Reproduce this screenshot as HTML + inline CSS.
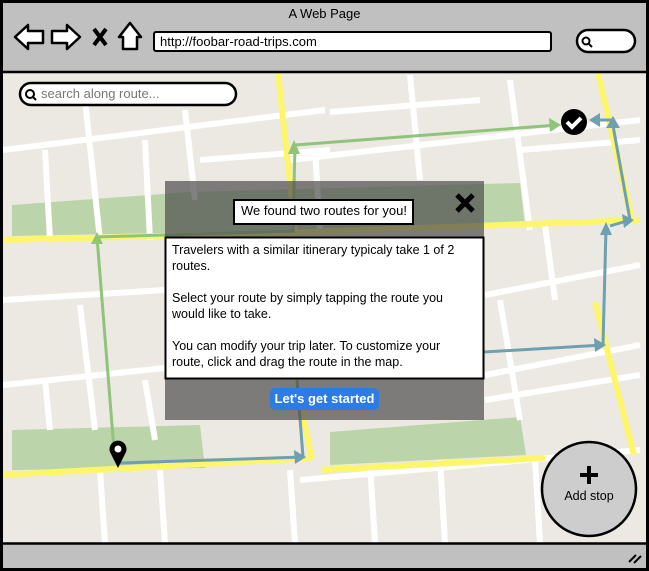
<!DOCTYPE html>
<html><head><style>
body{margin:0;width:649px;height:571px;overflow:hidden;font-family:"Liberation Sans",sans-serif;}
.t{position:absolute;color:#000;}
</style></head><body>
<svg width="649" height="571" style="position:absolute;left:0;top:0">
<rect x="0" y="0" width="649" height="571" fill="#c0c0c0"/>
<rect x="2" y="72" width="644" height="472" fill="#ebe9e2"/>
<polygon points="12,205 190,192 520,183 525,226 12,236" fill="#bcd4aa"/>
<polygon points="12,430 200,425 205,468 12,470" fill="#bcd4aa"/>
<polygon points="330,432 520,417 526,455 330,465" fill="#bcd4aa"/>
<g stroke="#fff" stroke-width="6" fill="none">
<line x1="3" y1="150" x2="325" y2="110"/>
<line x1="200" y1="160" x2="330" y2="150"/>
<line x1="330" y1="112" x2="480" y2="100"/>
<line x1="290" y1="160" x2="640" y2="120"/>
<line x1="520" y1="150" x2="640" y2="140"/>
<line x1="85" y1="100" x2="100" y2="240"/>
<line x1="45" y1="150" x2="50" y2="240"/>
<line x1="145" y1="140" x2="150" y2="240"/>
<line x1="185" y1="110" x2="195" y2="200"/>
<line x1="315" y1="150" x2="320" y2="230"/>
<line x1="410" y1="75" x2="420" y2="180"/>
<line x1="510" y1="80" x2="530" y2="230"/>
<line x1="545" y1="225" x2="555" y2="300"/>
<line x1="3" y1="300" x2="165" y2="290"/>
<line x1="3" y1="385" x2="165" y2="368"/>
<line x1="80" y1="305" x2="95" y2="430"/>
<line x1="45" y1="380" x2="50" y2="430"/>
<line x1="145" y1="380" x2="155" y2="440"/>
<line x1="485" y1="295" x2="640" y2="265"/>
<line x1="485" y1="375" x2="640" y2="345"/>
<line x1="485" y1="400" x2="640" y2="375"/>
<line x1="500" y1="300" x2="520" y2="420"/>
<line x1="100" y1="470" x2="105" y2="543"/>
<line x1="160" y1="470" x2="165" y2="543"/>
<line x1="290" y1="470" x2="295" y2="543"/>
<line x1="370" y1="465" x2="375" y2="543"/>
<line x1="440" y1="460" x2="445" y2="543"/>
<line x1="535" y1="460" x2="540" y2="543"/>
<line x1="300" y1="480" x2="640" y2="450"/>
</g>
<g stroke="#fdf66a" stroke-width="6" fill="none">
<polyline points="2,240 280,233 640,220"/>
<line x1="278" y1="73" x2="296" y2="238"/>
<line x1="598" y1="73" x2="632" y2="220"/>
<line x1="2" y1="475" x2="312" y2="458"/>
<line x1="322" y1="470" x2="545" y2="458"/>
<line x1="595" y1="302" x2="634" y2="455"/>
<line x1="295" y1="380" x2="312" y2="458"/>
</g>
<g stroke="#8fc47a" stroke-width="3" fill="none">
<polyline points="114,450 97,237 293,231 295,145 558,125"/>
</g>
<polygon points="97,232 91,244 103,244" fill="#8fc47a"/>
<polygon points="294,140 288,154 300,154" fill="#8fc47a"/>
<polygon points="561,125 549,118 550,132" fill="#8fc47a"/>
<g stroke="#6fa0b0" stroke-width="3" fill="none">
<polyline points="120,463 303,457 297,380"/>
<polyline points="484,352 603,345 606,228"/>
<polyline points="610,226 630,220 612,120 593,120"/>
</g>
<polygon points="306,457 294,450 295,464" fill="#6fa0b0"/>
<polygon points="606,345 594,338 595,352" fill="#6fa0b0"/>
<polygon points="606,222 600,235 612,235" fill="#6fa0b0"/>
<polygon points="634,220 622,214 624,228" fill="#6fa0b0"/>
<polygon points="589,120 600,113 600,127" fill="#6fa0b0"/>
<polygon points="613,116 606,128 620,128" fill="#6fa0b0"/>
<path d="M118,468 L110,452 A8.5,8.5 0 1 1 126,452 Z" fill="#000"/>
<circle cx="118" cy="449" r="3.5" fill="#fff"/>
<circle cx="574" cy="122" r="13" fill="#000"/>
<path d="M567,122 l5,5 l9,-9" stroke="#fff" stroke-width="4" fill="none"/>
<rect x="165" y="181" width="319" height="239" fill="rgba(80,80,80,0.72)"/>
<rect x="165.5" y="237.5" width="318" height="141" fill="#fff" stroke="#000" stroke-width="2"/>
<rect x="234" y="200" width="179" height="24" fill="#fff" stroke="#000" stroke-width="2"/>
<path d="M457,195 l16,16 M473,195 l-16,16" stroke="#000" stroke-width="5"/>
<rect x="270" y="388" width="109" height="22" rx="5" fill="#2d7be5"/>
<circle cx="589" cy="489" r="47" fill="#cdcdcd" stroke="#000" stroke-width="2.5"/>
<path d="M589,466 v18 M580,475 h18" stroke="#000" stroke-width="4"/>
<rect x="1.5" y="1.5" width="646" height="568" fill="none" stroke="#000" stroke-width="3"/>
<line x1="2" y1="72" x2="647" y2="72" stroke="#000" stroke-width="2.5"/>
<line x1="2" y1="543.5" x2="647" y2="543.5" stroke="#000" stroke-width="2.5"/>
<path d="M629,562 l7,-7 M634,563 l7,-7" stroke="#000" stroke-width="2"/>
<path d="M15,37 L28,25 L28,31 L43,31 L43,43 L28,43 L28,49 Z" fill="#fff" stroke="#000" stroke-width="2.5" stroke-linejoin="round"/>
<path d="M80,37 L67,25 L67,31 L52,31 L52,43 L67,43 L67,49 Z" fill="#fff" stroke="#000" stroke-width="2.5" stroke-linejoin="round"/>
<path d="M94,29 l12,16 M106,29 l-12,16" stroke="#000" stroke-width="4"/>
<path d="M130,23 L119,37 L123,37 L123,49 L137,49 L137,37 L141,37 Z" fill="#fff" stroke="#000" stroke-width="2.5" stroke-linejoin="round"/>
<rect x="154" y="32" width="397" height="19" rx="2" fill="#fff" stroke="#000" stroke-width="2"/>
<rect x="577" y="30" width="58" height="22" rx="11" fill="#fff" stroke="#000" stroke-width="2.5"/>
<circle cx="586" cy="41" r="3.5" fill="none" stroke="#000" stroke-width="2"/>
<line x1="589" y1="44" x2="592" y2="47" stroke="#000" stroke-width="2"/>
<rect x="20" y="83" width="216" height="22" rx="11" fill="#fff" stroke="#000" stroke-width="2.5"/>
<circle cx="30" cy="94" r="4" fill="none" stroke="#000" stroke-width="2"/>
<line x1="33" y1="97" x2="36" y2="100" stroke="#000" stroke-width="2"/>
</svg>
<div class="t" style="left:0;width:649px;top:6px;text-align:center;font-size:13px">A Web Page</div>
<div class="t" style="left:160px;top:34px;font-size:13px">http://foobar-road-trips.com</div>
<div class="t" style="left:41px;top:86px;font-size:13px;color:#777">search along route...</div>
<div class="t" style="left:241px;top:203px;font-size:13px">We found two routes for you!</div>
<div class="t" style="left:172px;top:242px;width:292px;font-size:12.5px;line-height:16px">Travelers with a similar itinerary typicaly take 1 of 2 routes.<br><br>Select your route by simply tapping the route you would like to take.<br><br>You can modify your trip later. To customize your route, click and drag the route in the map.</div>
<div class="t" style="left:270px;top:391px;width:109px;text-align:center;font-size:13px;font-weight:bold;color:#fff">Let's get started</div>
<div class="t" style="left:549px;top:489px;width:80px;text-align:center;font-size:12.5px">Add stop</div>
</body></html>
